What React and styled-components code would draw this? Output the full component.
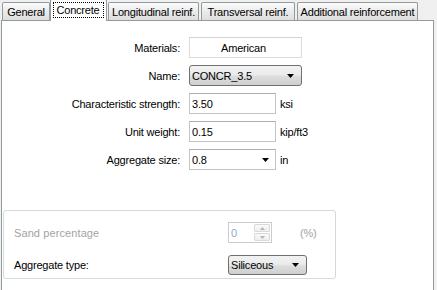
import React from "react";
import styled, { createGlobalStyle } from "styled-components";

const Global = createGlobalStyle`
  html, body { margin: 0; padding: 0; background: #f0f0f0; }
  body {
    font-family: "Liberation Sans", Arial, sans-serif;
    font-size: 11px;
    letter-spacing: -0.2px;
    color: #000;
  }
`;

const Window = styled.div`
  width: 437px;
  height: 290px;
  overflow: hidden;
  display: flex;
  flex-direction: column;
  background: #f0f0f0;
`;

const TabStrip = styled.div`
  display: flex;
  align-items: flex-end;
  height: 20px;
  padding-left: 2px;
  position: relative;
  z-index: 1;
`;

const Tab = styled.div`
  box-sizing: border-box;
  width: ${(p) => p.$w}px;
  margin-left: ${(p) => p.$ml || 0}px;
  height: ${(p) => (p.$active ? 22 : 18)}px;
  margin-bottom: ${(p) => (p.$active ? -1 : 0)}px;
  border: 1px solid #919b9c;
  border-bottom: none;
  border-radius: 2px 2px 0 0;
  background: ${(p) =>
    p.$active ? "#fff" : "linear-gradient(#fbfbfb 0%, #ececec 45%, #dedede 100%)"};
  display: flex;
  align-items: ${(p) => (p.$active ? "flex-start" : "center")};
  padding-top: ${(p) => (p.$active ? 2 : 0)}px;
  justify-content: center;
  white-space: nowrap;
`;

const Focus = styled.span`
  border: 1px dotted #000;
  padding: 1px 3px 1px 2px;
  line-height: 12px;
`;

const Panel = styled.div`
  box-sizing: border-box;
  width: 433px;
  margin-left: 1px;
  flex: 1;
  background: #fff;
  border: 1px solid #919b9c;
  border-bottom: none;
  padding-top: 16px;
  display: flex;
  flex-direction: column;
`;

const Form = styled.div`
  display: flex;
  flex-direction: column;
  gap: 7px;
`;

const Row = styled.div`
  display: flex;
  align-items: center;
  height: 21px;
`;

const Label = styled.div`
  width: 178px;
  margin-right: 9px;
  text-align: right;
  white-space: nowrap;
`;

const Unit = styled.div`
  margin-left: 4px;
  white-space: nowrap;
`;

const Box = styled.div`
  box-sizing: border-box;
  width: ${(p) => p.$w}px;
  height: 21px;
  border: 1px solid ${(p) => (p.$light ? "#dcdcdc" : "#c4c4c4")};
  border-top-color: ${(p) => (p.$light ? "#d4d4d4" : "#abadb3")};
  background: #fff;
  display: flex;
  align-items: center;
  justify-content: ${(p) => (p.$center ? "center" : "space-between")};
  padding: 0 6px 0 2px;
  white-space: nowrap;
`;

const Combo = styled.div`
  box-sizing: border-box;
  width: ${(p) => p.$w}px;
  height: ${(p) => p.$h || 21}px;
  border: 1px solid #707070;
  border-radius: 3px;
  background: linear-gradient(#f2f2f2 0%, #ebebeb 45%, #dddddd 55%, #cfcfcf 100%);
  display: flex;
  align-items: center;
  justify-content: space-between;
  padding: 0 7px 0 2px;
  white-space: nowrap;
`;

const Arrow = () => (
  <svg width="7" height="4" viewBox="0 0 7 4">
    <path d="M0 0H7L3.5 4Z" fill="#000" />
  </svg>
);

const Group = styled.div`
  box-sizing: border-box;
  width: 333px;
  height: 69px;
  margin: 40px 0 0 1px;
  border: 1px solid #d5dadd;
  border-radius: 3px;
  padding: 11px 0 0 10px;
  display: grid;
  grid-template-columns: 214px 44px auto;
  grid-auto-rows: 21px;
  row-gap: 11px;
  align-items: center;
`;

const GroupLabel = styled.div`
  color: ${(p) => (p.$disabled ? "#a3a3a3" : "#000")};
  letter-spacing: ${(p) => (p.$disabled ? "0.1px" : "-0.2px")};
  white-space: nowrap;
`;

const GroupUnit = styled.div`
  color: #a3a3a3;
  margin-left: 28px;
`;

const Spinner = styled.div`
  box-sizing: border-box;
  width: 44px;
  height: 21px;
  border: 1px solid #cccccc;
  background: #fff;
  display: flex;
  align-items: stretch;
`;

const SpinValue = styled.div`
  flex: 1;
  color: #8fa8cc;
  padding-left: 2px;
  display: flex;
  align-items: center;
`;

const SpinButtons = styled.div`
  width: 16px;
  margin: 1px;
  display: flex;
  flex-direction: column;
  gap: 1px;
`;

const SpinBtn = styled.div`
  flex: 1;
  border: 1px solid #dadada;
  border-radius: 1px;
  background: linear-gradient(#fafafa, #eeeeee);
  display: flex;
  align-items: center;
  justify-content: center;
`;

const SmallTri = ({ up }) => (
  <svg width="5" height="3" viewBox="0 0 5 3">
    <path d={up ? "M0 3H5L2.5 0Z" : "M0 0H5L2.5 3Z"} fill="#b5b5b5" />
  </svg>
);

const ComboCell = styled.div`
  grid-column: 2 / span 2;
`;

export default function App() {
  return (
    <>
      <Global />
      <Window>
        <TabStrip>
          <Tab $w={48}>General</Tab>
          <Tab $w={57} $active>
            <Focus>Concrete</Focus>
          </Tab>
          <Tab $w={91} $ml={1}>Longitudinal reinf.</Tab>
          <Tab $w={94} $ml={2}>Transversal reinf.</Tab>
          <Tab $w={121} $ml={2}>Additional reinforcement</Tab>
        </TabStrip>
        <Panel>
          <Form>
            <Row>
              <Label>Materials:</Label>
              <Box $w={113} $center $light>American</Box>
            </Row>
            <Row>
              <Label>Name:</Label>
              <Combo $w={113}>
                CONCR_3.5
                <Arrow />
              </Combo>
            </Row>
            <Row>
              <Label>Characteristic strength:</Label>
              <Box $w={87}>3.50</Box>
              <Unit>ksi</Unit>
            </Row>
            <Row>
              <Label>Unit weight:</Label>
              <Box $w={87}>0.15</Box>
              <Unit>kip/ft3</Unit>
            </Row>
            <Row>
              <Label>Aggregate size:</Label>
              <Box $w={87}>
                0.8
                <Arrow />
              </Box>
              <Unit>in</Unit>
            </Row>
          </Form>
          <Group>
            <GroupLabel $disabled>Sand percentage</GroupLabel>
            <Spinner>
              <SpinValue>0</SpinValue>
              <SpinButtons>
                <SpinBtn>
                  <SmallTri up />
                </SpinBtn>
                <SpinBtn>
                  <SmallTri />
                </SpinBtn>
              </SpinButtons>
            </Spinner>
            <GroupUnit>(%)</GroupUnit>
            <GroupLabel>Aggregate type:</GroupLabel>
            <ComboCell>
              <Combo $w={79} $h={20}>
                Siliceous
                <Arrow />
              </Combo>
            </ComboCell>
          </Group>
        </Panel>
      </Window>
    </>
  );
}
